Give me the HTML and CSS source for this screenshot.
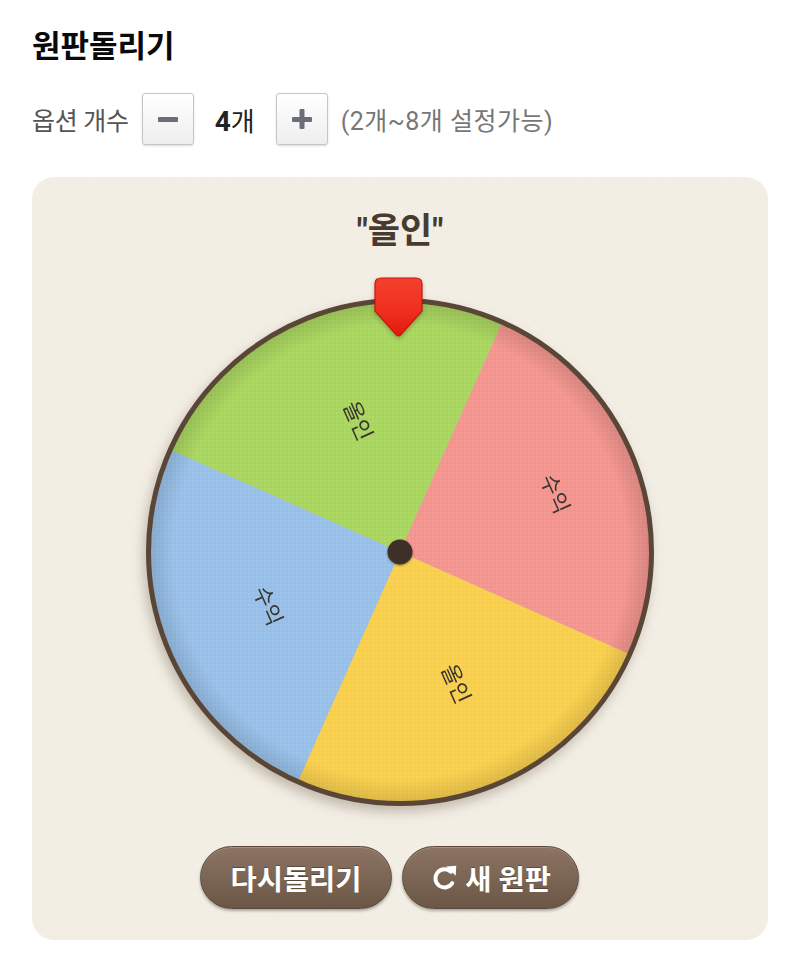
FILE: index.html
```html
<!DOCTYPE html>
<html lang="ko">
<head>
<meta charset="utf-8">
<title>원판돌리기</title>
<link rel="stylesheet" href="styles.css">
</head>
<body>
<div class="page">
  <h1 class="title">원판돌리기</h1>
  <div class="options">
    <span class="opt-label">옵션 개수</span>
    <button class="step" aria-label="minus"><span class="bar"></span></button>
    <span class="count"><b>4</b>개</span>
    <button class="step" aria-label="plus"><span class="bar"></span><span class="bar vert"></span></button>
    <span class="hint">(2개~8개 설정가능)</span>
  </div>

  <section class="card">
    <div class="result">"올인"</div>
    <div class="stage">
      <svg class="wheel" width="520" height="520" viewBox="0 0 520 520">
        <defs>
          <pattern id="dots" width="4" height="4" patternUnits="userSpaceOnUse">
            <circle cx="1" cy="1" r="0.7" fill="rgba(255,255,255,0.18)"/>
            <circle cx="3" cy="3" r="0.6" fill="rgba(0,0,0,0.04)"/>
          </pattern>
          <radialGradient id="rim" cx="0.5" cy="0.5" r="0.5">
            <stop offset="0.9" stop-color="rgba(0,0,0,0)"/>
            <stop offset="1" stop-color="rgba(0,0,0,0.13)"/>
          </radialGradient>
        </defs>
        <g class="segs">
          <path d="M260,260 L29.8,157.5 A252,252 0 0 1 362.5,29.8 Z" fill="#a9d65f"/>
          <path d="M260,260 L362.5,29.8 A252,252 0 0 1 490.2,362.5 Z" fill="#f4958f"/>
          <path d="M260,260 L490.2,362.5 A252,252 0 0 1 157.5,490.2 Z" fill="#f9d04d"/>
          <path d="M260,260 L157.5,490.2 A252,252 0 0 1 29.8,157.5 Z" fill="#98c0e8"/>
        </g>
        <circle cx="260" cy="260" r="252" fill="url(#dots)"/>
        <circle cx="260" cy="260" r="252" fill="url(#rim)"/>
        <g class="labels">
          <text x="220" y="128" transform="rotate(66 220 128)">올인</text>
          <text x="417" y="201" transform="rotate(66 417 201)">수익</text>
          <text x="318" y="391" transform="rotate(66 318 391)">올인</text>
          <text x="130" y="313" transform="rotate(66 130 313)">수익</text>
        </g>
        <circle cx="260" cy="260" r="251.5" fill="none" stroke="#5a4636" stroke-width="5"/>
        <circle class="hub" cx="260" cy="260" r="12.5" fill="#3e2f28"/>
      </svg>
      <svg class="pointer" width="49" height="61" viewBox="-1 -1 49 61">
        <defs>
          <linearGradient id="pg" x1="0" y1="0" x2="0" y2="1">
            <stop offset="0" stop-color="#f5402f"/>
            <stop offset="0.55" stop-color="#f0301f"/>
            <stop offset="1" stop-color="#e0180f"/>
          </linearGradient>
        </defs>
        <path d="M6,0 H41 Q47,0 47,6 V33 L26,56.5 Q23.5,59.5 21,56.5 L0,33 V6 Q0,0 6,0 Z" fill="url(#pg)" stroke="#c9170e" stroke-width="1.2"/>
      </svg>
    </div>
    <div class="buttons">
      <button class="btn">다시돌리기</button>
      <button class="btn">
        <svg class="ico" width="30" height="30" viewBox="0 0 28 28">
          <path d="M19.5,8.2 A8.5,8.5 0 1 0 20.8,18.8" fill="none" stroke="#fff" stroke-width="3.6" stroke-linecap="round"/>
          <polygon points="15,3.2 24.5,2.5 24,12" fill="#fff"/>
        </svg>
        새 원판
      </button>
    </div>
  </section>
</div>
</body>
</html>
```

FILE: styles.css
```css
* { box-sizing: border-box; }

body {
  margin: 0;
  background: #ffffff;
  font-family: Roboto, "Noto Sans CJK KR", "Noto Sans", sans-serif;
  color: #222;
}

.page {
  padding: 0 32px;
}

.title {
  margin: 0;
  padding-top: 27px;
  font-size: 31px;
  line-height: 40px;
  font-weight: 700;
  color: #0a0a0a;
}

.options {
  display: flex;
  align-items: center;
  height: 52px;
  margin-top: 26px;
  font-size: 25px;
}

.opt-label {
  color: #555;
  margin-right: 13px;
  letter-spacing: -0.3px;
}

.step {
  width: 52px;
  height: 52px;
  padding: 0;
  border: 1px solid #c6c6c6;
  border-radius: 3px;
  background: linear-gradient(#ffffff, #eeeeee);
  box-shadow: 0 1px 2px rgba(0, 0, 0, 0.15);
  position: relative;
  display: flex;
  align-items: center;
  justify-content: center;
}

.bar {
  display: block;
  width: 20px;
  height: 5px;
  background: #6b6e79;
  border-radius: 1px;
}

.bar.vert {
  position: absolute;
  width: 5px;
  height: 20px;
  left: 50%;
  top: 50%;
  transform: translate(-50%, -50%);
}

.count {
  width: 82px;
  text-align: center;
  color: #222;
  font-size: 26px;
}

.count b {
  font-weight: 700;
  font-size: 28px;
}

.hint {
  color: #777;
  margin-left: 13px;
  letter-spacing: 0.5px;
}

.card {
  margin-top: 32px;
  border-radius: 22px;
  background-color: #f2ede3;
  background-image: repeating-linear-gradient(45deg, rgba(255, 255, 255, 0.14) 0 1px, rgba(0, 0, 0, 0) 1px 3px);
  padding: 35px 0 31px;
}

.result {
  text-align: center;
  font-size: 35px;
  line-height: 40px;
  font-weight: 700;
  color: #473a31;
}

.stage {
  position: relative;
  width: 520px;
  height: 520px;
  margin: 40px auto 0;
}

.wheel {
  display: block;
  filter: drop-shadow(-3px 6px 6px rgba(70, 50, 30, 0.28));
}

.labels text {
  font-family: "Noto Sans CJK KR", sans-serif;
  font-size: 22px;
  fill: #3a3530;
  text-anchor: middle;
  dominant-baseline: central;
}

.hub {
  filter: drop-shadow(0 1px 1px rgba(0, 0, 0, 0.4));
}

.pointer {
  position: absolute;
  left: 234px;
  top: -15px;
  filter: drop-shadow(0 2px 2px rgba(0, 0, 0, 0.25));
}

.buttons {
  display: flex;
  justify-content: center;
  gap: 10px;
  margin-top: 34px;
  padding-right: 21px;
}

.btn {
  height: 63px;
  padding: 0 20px;
  border: 1px solid #5c4a3b;
  border-radius: 32px;
  background: linear-gradient(#8c7462, #6b5747);
  box-shadow: inset 0 1px 0 rgba(255, 255, 255, 0.2), 0 2px 3px rgba(0, 0, 0, 0.3);
  color: #fff;
  font-family: Roboto, "Noto Sans CJK KR", sans-serif;
  font-size: 28.5px;
  font-weight: 700;
  display: flex;
  align-items: center;
  gap: 5px;
  text-shadow: 0 -1px 0 rgba(0, 0, 0, 0.3);
}

.btn:first-child {
  width: 192px;
  justify-content: center;
}

.btn:last-child {
  width: 177px;
  justify-content: center;
}

.ico {
  display: block;
}
```
